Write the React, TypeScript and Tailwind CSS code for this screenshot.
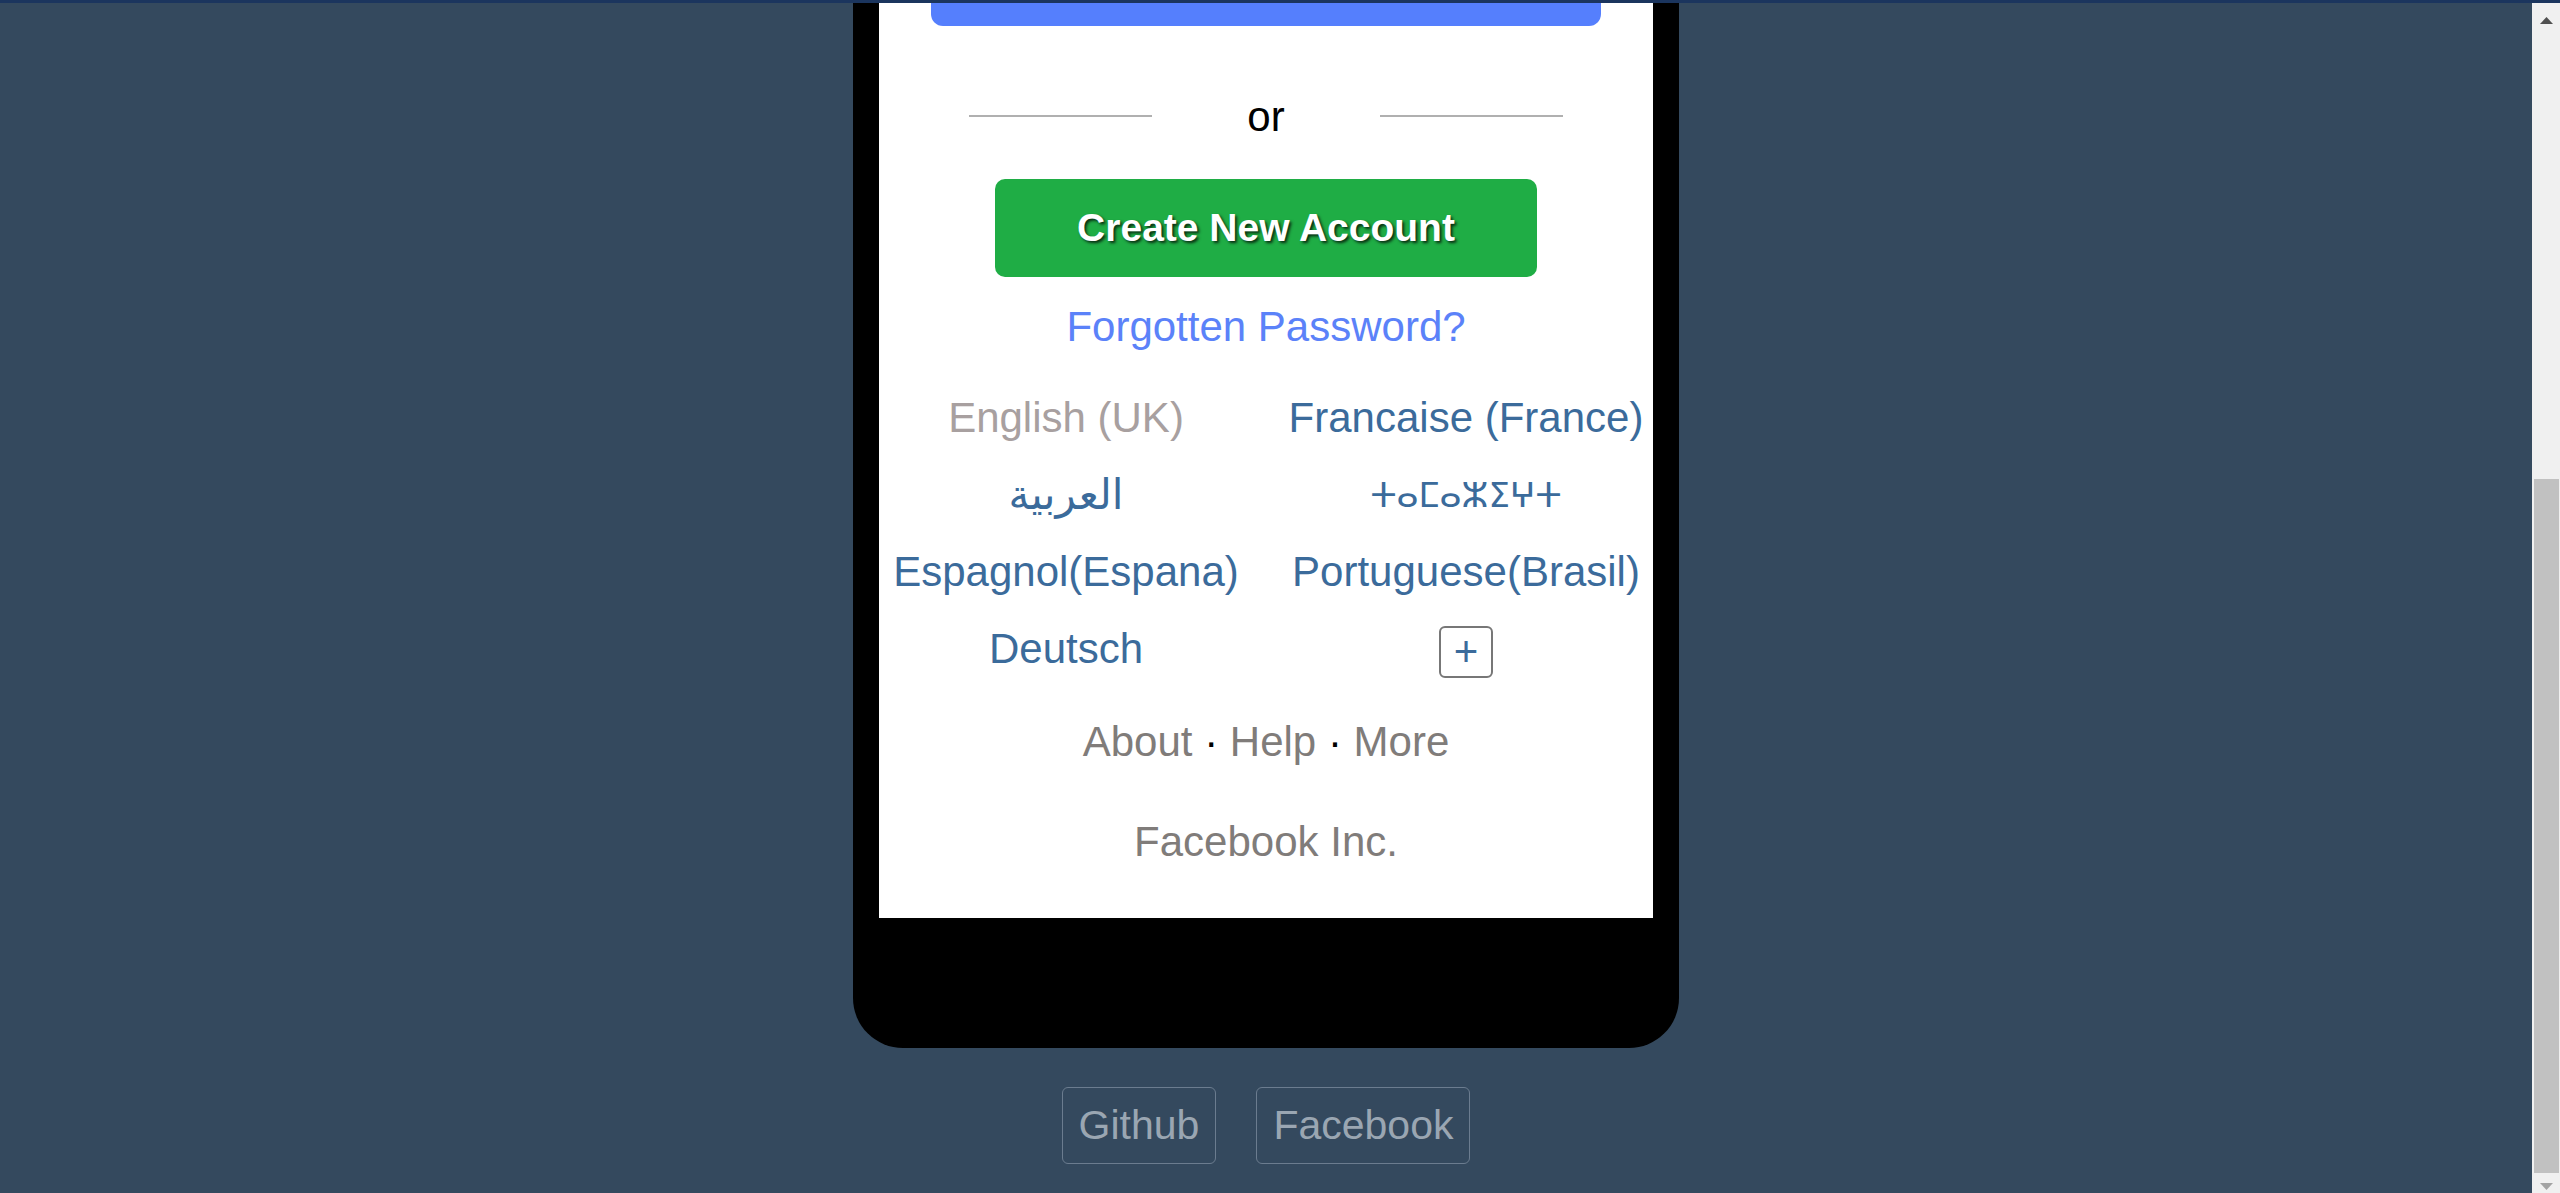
import React from "react";

const languages = [
  { label: "English (UK)", active: true },
  { label: "Francaise (France)" },
  { label: "العربية" },
  { label: "ⵜⴰⵎⴰⵣⵉⵖⵜ", small: true },
  { label: "Espagnol(Espana)" },
  { label: "Portuguese(Brasil)" },
  { label: "Deutsch" },
];

function Scrollbar() {
  return (
    <div className="w-[28px] shrink-0 bg-[#f0f0f0] flex flex-col">
      <div className="h-[34px] flex items-center justify-center">
        <svg width="13" height="7" viewBox="0 0 13 7">
          <polygon points="0,7 6.5,0 13,7" fill="#505050" />
        </svg>
      </div>
      <div className="flex-1 flex flex-col justify-end">
        <div className="h-[694px] ml-[2px] mr-[1px] bg-[#c1c1c1]" />
      </div>
      <div className="h-[20px] flex justify-center pt-[10px]">
        <svg width="13" height="7" viewBox="0 0 13 7">
          <polygon points="0,0 13,0 6.5,7" fill="#a3a3a3" />
        </svg>
      </div>
    </div>
  );
}

function Phone() {
  return (
    <div className="shrink-0 w-[826px] bg-black rounded-[50px] px-[26px] pt-[60px] pb-[130px]">
      <div className="w-[774px] bg-white flex flex-col items-center pt-[40px] pb-[52px] text-[42px] leading-[48px]">
        {/* log in button, mostly scrolled out of view */}
        <div className="w-[670px] h-[98px] rounded-[12px] bg-[#557ffd]" />

        {/* divider */}
        <div className="mt-[67px] h-[48px] flex items-center">
          <div className="w-[183px] h-[2px] mt-[-2px] bg-[#b0b0b0]" />
          <span className="w-[228px] text-center text-black">or</span>
          <div className="w-[183px] h-[2px] mt-[-2px] bg-[#b0b0b0]" />
        </div>

        <button className="mt-[38px] w-[542px] h-[98px] rounded-[10px] bg-[#1fad45] text-white font-bold text-[39px] [text-shadow:2px_2px_3px_rgba(0,0,0,0.75)]">
          Create New Account
        </button>

        <a className="mt-[26px] text-[#5b82f9] cursor-pointer">Forgotten Password?</a>

        {/* languages */}
        <div className="mt-[28px] grid grid-cols-[374px_374px] gap-x-[26px] font-['Liberation_Sans','DejaVu_Sans',sans-serif]">
          {languages.map((l) => (
            <div key={l.label} className="h-[77px] flex items-center justify-center">
              <span
                className={
                  (l.active ? "text-[#a8a0a0]" : "text-[#3b6b9b]") +
                  (l.small ? " text-[34px]" : "")
                }
              >
                {l.label}
              </span>
            </div>
          ))}
          <div className="h-[77px] flex items-center justify-center">
            <button className="mt-[6px] border-2 border-[#777] rounded-[6px] px-[13px] text-[#3b6b9b] leading-[48px]">
              +
            </button>
          </div>
        </div>

        <div className="mt-[31px] text-[#807c7a]">
          <a>About</a>
          <span className="text-black"> · </span>
          <a>Help</a>
          <span className="text-black"> · </span>
          <a>More</a>
        </div>

        <div className="mt-[52px] text-[#807c7a]">Facebook Inc.</div>
      </div>
    </div>
  );
}

export default function App() {
  return (
    <div className="h-[1193px] w-full overflow-hidden flex flex-col bg-[#34495e] font-['Liberation_Sans',Arial,sans-serif]">
      <div className="h-[3px] shrink-0 bg-[#1b355e]" />
      <div className="flex flex-1 min-h-0">
        <main className="flex-1 min-w-0 overflow-hidden flex flex-col items-center justify-end pb-[29px]">
          <Phone />
          <div className="shrink-0 mt-[39px] flex gap-[40px] text-[41px] leading-[47px] text-[#9aa6b2]">
            <a className="border border-[#6b7c8f] rounded-[6px] px-[16px] py-[14px]">Github</a>
            <a className="border border-[#6b7c8f] rounded-[6px] px-[16px] py-[14px]">Facebook</a>
          </div>
        </main>
        <Scrollbar />
      </div>
    </div>
  );
}
